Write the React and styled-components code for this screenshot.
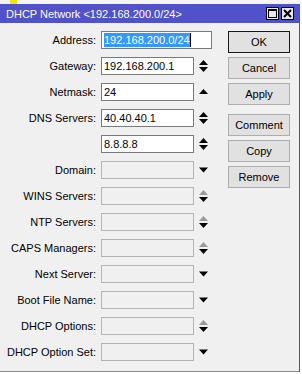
import styled, { createGlobalStyle } from "styled-components";

const GlobalStyle = createGlobalStyle`
  html, body {
    margin: 0;
    padding: 0;
    background: #ffffff;
  }
  body {
    font-family: "Liberation Sans", Arial, sans-serif;
    font-size: 11px;
    color: #000;
  }
`;

const fields = [
  { label: "Address:", value: "192.168.200.0/24", kind: "wide", selected: true },
  { label: "Gateway:", value: "192.168.200.1", arrow: "updown" },
  { label: "Netmask:", value: "24", arrow: "up" },
  { label: "DNS Servers:", value: "40.40.40.1", arrow: "updown" },
  { label: "", value: "8.8.8.8", arrow: "updown" },
  { label: "Domain:", disabled: true, arrow: "down" },
  { label: "WINS Servers:", disabled: true, arrow: "grayupdown" },
  { label: "NTP Servers:", disabled: true, arrow: "grayupdown" },
  { label: "CAPS Managers:", disabled: true, arrow: "grayupdown" },
  { label: "Next Server:", disabled: true, arrow: "down" },
  { label: "Boot File Name:", disabled: true, arrow: "down" },
  { label: "DHCP Options:", disabled: true, arrow: "grayupdown" },
  { label: "DHCP Option Set:", disabled: true, arrow: "down" },
];

const buttons = [
  { text: "OK", primary: true },
  { text: "Cancel" },
  { text: "Apply" },
  { text: "Comment", spaced: true },
  { text: "Copy" },
  { text: "Remove" },
];

function Arrow({ type }) {
  if (type === "down") {
    return (
      <svg width="9" height="12" viewBox="0 0 9 12">
        <polygon points="0,3.5 9,3.5 4.5,8.5" fill="#000" />
      </svg>
    );
  }
  if (type === "up") {
    return (
      <svg width="9" height="12" viewBox="0 0 9 12">
        <polygon points="0,8 4.5,3 9,8" fill="#000" />
      </svg>
    );
  }
  const upColor = type === "grayupdown" ? "#9a9a9a" : "#000";
  return (
    <svg width="9" height="12" viewBox="0 0 9 12">
      <polygon points="0,5 4.5,0 9,5" fill={upColor} />
      <polygon points="0,7 9,7 4.5,12" fill="#000" />
    </svg>
  );
}

export default function App() {
  return (
    <Page>
      <GlobalStyle />
      <TopStrip>
        <YellowMark />
      </TopStrip>
      <Dialog>
        <TitleBar>
          <Title>DHCP Network &lt;192.168.200.0/24&gt;</Title>
          <TitleButtons>
            <TitleButton>
              <svg width="9" height="9" viewBox="0 0 9 9">
                <rect x="0.5" y="0.5" width="8" height="8" fill="none" stroke="#000" />
                <rect x="0" y="0" width="9" height="2" fill="#000" />
              </svg>
            </TitleButton>
            <TitleButton>
              <svg width="9" height="9" viewBox="0 0 9 9">
                <path d="M1 1 L8 8 M8 1 L1 8" stroke="#000" strokeWidth="2" />
              </svg>
            </TitleButton>
          </TitleButtons>
        </TitleBar>
        <Body>
          <FormGrid>
            {fields.map((f, i) => (
              <Row key={i}>
                <Label>{f.label}</Label>
                <Field $wide={f.kind === "wide"} $disabled={f.disabled}>
                  {f.selected ? (
                    <>
                      <Selection>{f.value}</Selection>
                      <Caret />
                    </>
                  ) : (
                    f.value
                  )}
                </Field>
                {f.arrow && (
                  <ArrowCell>
                    <Arrow type={f.arrow} />
                  </ArrowCell>
                )}
              </Row>
            ))}
          </FormGrid>
          <ButtonColumn>
            {buttons.map((b) => (
              <Button key={b.text} $primary={b.primary} $spaced={b.spaced}>
                {b.text}
              </Button>
            ))}
          </ButtonColumn>
        </Body>
      </Dialog>
    </Page>
  );
}

const Page = styled.div`
  width: 302px;
  height: 374px;
  overflow: hidden;
  background: #ffffff;
`;

const TopStrip = styled.div`
  height: 4px;
  background: #f4f4f4;
  display: flex;
`;

const YellowMark = styled.div`
  width: 7px;
  margin-left: 10px;
  background: #f2e600;
`;

const Dialog = styled.div`
  width: 299px;
  background: #f0f0f0;
  border-right: 1px solid #5a5a5a;
  border-bottom: 1px solid #8a8a8a;
  display: flex;
  flex-direction: column;
`;

const TitleBar = styled.div`
  height: 19px;
  background: #5151c9;
  display: flex;
  align-items: center;
  justify-content: space-between;
  padding: 0 5px 0 6px;
`;

const Title = styled.div`
  color: #ffffff;
  font-size: 11px;
  white-space: nowrap;
`;

const TitleButtons = styled.div`
  display: flex;
  gap: 2px;
`;

const TitleButton = styled.div`
  width: 13px;
  height: 13px;
  box-sizing: border-box;
  background: #e8e8e8;
  border: 1px solid #000;
  display: flex;
  align-items: center;
  justify-content: center;
`;

const Body = styled.div`
  display: flex;
  align-items: flex-start;
  padding: 8px 0 10px;
`;

const FormGrid = styled.div`
  display: grid;
  grid-template-columns: 101px 93px 18px;
  row-gap: 8px;
`;

const Row = styled.div`
  display: contents;
`;

const Label = styled.div`
  grid-column: 1;
  height: 18px;
  padding-right: 5px;
  display: flex;
  align-items: center;
  justify-content: flex-end;
  white-space: nowrap;
`;

const Field = styled.div`
  grid-column: ${(p) => (p.$wide ? "2 / span 2" : "2")};
  height: 18px;
  box-sizing: border-box;
  border: 1px solid ${(p) => (p.$disabled ? "#b4b4b4" : "#7a7a7a")};
  background: ${(p) => (p.$disabled ? "#f0f0f0" : "#ffffff")};
  padding: 0 2px;
  display: flex;
  align-items: center;
  white-space: nowrap;
`;

const Selection = styled.span`
  background: #3399ff;
  color: #ffffff;
  line-height: 14px;
`;

const Caret = styled.span`
  width: 1px;
  height: 14px;
  background: #000;
`;

const ArrowCell = styled.div`
  grid-column: 3;
  height: 18px;
  padding-left: 5px;
  display: flex;
  align-items: center;
`;

const ButtonColumn = styled.div`
  margin-left: 16px;
  display: flex;
  flex-direction: column;
  gap: 4px;
`;

const Button = styled.div`
  width: 62px;
  height: 22px;
  box-sizing: border-box;
  margin-top: ${(p) => (p.$spaced ? "5px" : "0")};
  background: #e1e1e1;
  border: 1px solid ${(p) => (p.$primary ? "#1a1a1a" : "#adadad")};
  display: flex;
  align-items: center;
  justify-content: center;
  font-size: 11px;
`;
